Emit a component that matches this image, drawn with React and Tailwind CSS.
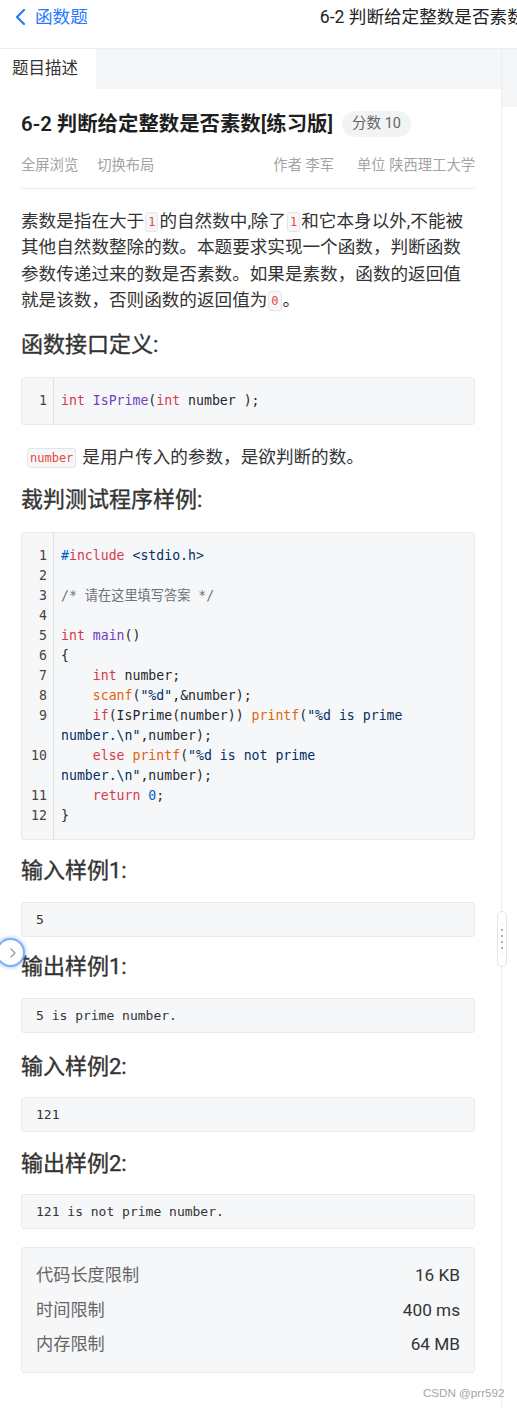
import React from 'react';

const C = {
  kw: '#d73a49',
  fn: '#6f42c1',
  str: '#032f62',
  tx: '#24292e',
  cm: '#6a737d',
  call: '#e36209',
  num: '#005cc5',
};

const sansFont = { fontFamily: 'Roboto, "Noto Sans CJK SC", sans-serif' };

const mainCode = [
  { n: '1', seg: [['#', C.num], ['include', C.kw], [' ', C.tx], ['<stdio.h>', C.str]] },
  { n: '2', seg: [] },
  { n: '3', seg: [['/* 请在这里填写答案 */', C.cm]] },
  { n: '4', seg: [] },
  { n: '5', seg: [['int', C.kw], [' ', C.tx], ['main', C.fn], ['()', C.tx]] },
  { n: '6', seg: [['{', C.tx]] },
  { n: '7', seg: [['    ', C.tx], ['int', C.kw], [' number;', C.tx]] },
  { n: '8', seg: [['    ', C.tx], ['scanf', C.call], ['(', C.tx], ['"%d"', C.str], [',&number);', C.tx]] },
  { n: '9', seg: [['    ', C.tx], ['if', C.kw], ['(IsPrime(number)) ', C.tx], ['printf', C.call], ['(', C.tx], ['"%d is prime', C.str]] },
  { n: '', seg: [['number.\\n"', C.str], [',number);', C.tx]] },
  { n: '10', seg: [['    ', C.tx], ['else', C.kw], [' ', C.tx], ['printf', C.call], ['(', C.tx], ['"%d is not prime', C.str]] },
  { n: '', seg: [['number.\\n"', C.str], [',number);', C.tx]] },
  { n: '11', seg: [['    ', C.tx], ['return', C.kw], [' ', C.tx], ['0', C.num], [';', C.tx]] },
  { n: '12', seg: [['}', C.tx]] },
];

const protoCode = [
  { n: '1', seg: [['int', C.kw], [' ', C.tx], ['IsPrime', C.fn], ['(', C.tx], ['int', C.kw], [' number );', C.tx]] },
];

const CodeBlock = ({ lines }) => (
  <div className="flex bg-[#f6f7f9] border border-[#e8eaed] rounded-[3px] font-['DejaVu_Sans_Mono','Noto_Sans_CJK_SC',monospace] text-[13.2px]">
    <div className="w-[32px] shrink-0 border-r border-[#dcdfe3] py-[13px] pr-[6px] text-right text-[#444]">
      {lines.map((l, i) => (
        <div key={i} className="h-[20px] leading-[20px]">{l.n}</div>
      ))}
    </div>
    <div className="flex-1 py-[13px] pl-[7px]">
      {lines.map((l, i) => (
        <div key={i} className="h-[20px] leading-[20px] whitespace-pre">
          {l.seg.map(([t, c], j) => (
            <span key={j} style={{ color: c }}>{t}</span>
          ))}
        </div>
      ))}
    </div>
  </div>
);

const InlineCode = ({ children, className = '' }) => (
  <code className={`inline-block align-[1px] h-[20px] leading-[18px] px-[2px] mx-[1px] bg-[#f6f7f9] border border-[#e5e6eb] rounded-[3px] text-[#e8473c] font-['DejaVu_Sans_Mono',monospace] text-[12px] ${className}`}>
    {children}
  </code>
);

const Heading = ({ children, className = '' }) => (
  <h3 className={`text-[22px] leading-[30px] font-normal text-[#333] [-webkit-text-stroke:0.35px_#333] ${className}`}>{children}</h3>
);

const SampleBox = ({ children, className = '' }) => (
  <div className={`bg-[#f6f7f9] border border-[#e8eaed] rounded-[3px] px-[14px] py-[6.5px] text-[13px] leading-[20px] text-[#333] whitespace-pre font-['DejaVu_Sans_Mono',monospace] ${className}`}>
    {children}
  </div>
);

export default function App() {
  return (
    <div className="relative w-[517px] h-[1408px] overflow-hidden bg-white text-[#333]" style={sansFont}>
      {/* Top bar */}
      <div className="flex h-[49px] border-b border-[#eceef1] overflow-hidden">
        <div className="flex items-start pt-[5px] pl-[14px] shrink-0 text-[#2878ff]">
          <svg width="12" height="24" viewBox="0 0 12 24">
            <path d="M10 5 L3 12 L10 19" fill="none" stroke="#2878ff" strokeWidth="2.2" strokeLinecap="round" strokeLinejoin="round" />
          </svg>
          <span className="ml-[9px] text-[17.6px] leading-[24px]">函数题</span>
        </div>
        <div className="ml-[232px] pt-[5px] shrink-0 whitespace-nowrap text-[17.6px] leading-[24px] text-[#222]">
          6-2 判断给定整数是否素数[练习版]
        </div>
      </div>

      <div className="flex">
        {/* Main column */}
        <div className="w-[501px] shrink-0">
          <div className="flex h-[40px] bg-[#f5f6f8]">
            <div className="w-[96px] bg-white pl-[12px] text-[16.5px] leading-[40px] text-[#333]">题目描述</div>
          </div>

          <div className="pl-[21px] pr-[26px]">
            <div className="flex items-center mt-[22px] h-[26px]">
              <h1 className="text-[20.4px] font-semibold text-[#1f1f1f] whitespace-nowrap">6-2 判断给定整数是否素数[练习版]</h1>
              <span className="ml-[9px] h-[26px] px-[10px] rounded-full bg-[#f2f3f5] text-[14.5px] leading-[26px] text-[#666]">分数 10</span>
            </div>

            <div className="flex items-center mt-[19px] h-[20px] text-[14.3px] text-[#a3a3a3] border-b border-[#ebebeb] pb-[12px] box-content">
              <span>全屏浏览</span>
              <span className="ml-[19px]">切换布局</span>
              <span className="ml-auto">作者 李军</span>
              <span className="ml-[23px]">单位 陕西理工大学</span>
            </div>

            <p className="mt-[19px] text-[17.6px] leading-[26.4px] text-[#333]">
              素数是指在大于<InlineCode>1</InlineCode>的自然数中,除了<InlineCode>1</InlineCode>和它本身以外,不能被其他自然数整除的数。本题要求实现一个函数，判断函数参数传递过来的数是否素数。如果是素数，函数的返回值就是该数，否则函数的返回值为<InlineCode>0</InlineCode>。
            </p>

            <Heading className="mt-[16px]">函数接口定义:</Heading>
            <div className="mt-[17px]">
              <CodeBlock lines={protoCode} />
            </div>

            <p className="mt-[19px] text-[17.6px] leading-[26.4px] text-[#333]">
              <InlineCode className="ml-[6px] mr-[6px]">number</InlineCode>是用户传入的参数，是欲判断的数。
            </p>

            <Heading className="mt-[15px]">裁判测试程序样例:</Heading>
            <div className="mt-[17px]">
              <CodeBlock lines={mainCode} />
            </div>

            <Heading className="mt-[16px]">输入样例1:</Heading>
            <SampleBox className="mt-[16px]">5</SampleBox>

            <Heading className="mt-[15px]">输出样例1:</Heading>
            <SampleBox className="mt-[16px]">5 is prime number.</SampleBox>

            <Heading className="mt-[19px]">输入样例2:</Heading>
            <SampleBox className="mt-[15px]">121</SampleBox>

            <Heading className="mt-[17px]">输出样例2:</Heading>
            <SampleBox className="mt-[15px]">121 is not prime number.</SampleBox>

            <div className="mt-[18px] bg-[#f6f7f9] border border-[#e8eaed] rounded-[3px] px-[14px] py-[10px] text-[17.2px]">
              {[
                ['代码长度限制', '16 KB'],
                ['时间限制', '400 ms'],
                ['内存限制', '64 MB'],
              ].map(([k, v]) => (
                <div key={k} className="flex justify-between h-[34.5px] leading-[34.5px]">
                  <span className="text-[#666]">{k}</span>
                  <span className="text-[#333]">{v}</span>
                </div>
              ))}
            </div>
          </div>
        </div>

        {/* Right side panel */}
        <div className="flex-1 border-l border-[#eceef1] h-[1359px]">
          <div className="h-[58px] bg-[#f5f6f8]" />
        </div>
      </div>

      {/* Drag handle */}
      <div className="absolute left-[497px] top-[911px] w-[10px] h-[56px] rounded-full bg-white border border-[#e3e5e8] flex flex-col items-center justify-center gap-[4px]">
        <span className="w-[1px] h-[1px] rounded-full bg-[#c8c8c8]" />
        <span className="w-[2px] h-[2px] rounded-full bg-[#999]" />
        <span className="w-[2px] h-[2px] rounded-full bg-[#999]" />
        <span className="w-[2px] h-[2px] rounded-full bg-[#999]" />
        <span className="w-[2px] h-[2px] rounded-full bg-[#999]" />
        <span className="w-[1px] h-[1px] rounded-full bg-[#c8c8c8]" />
      </div>

      {/* Floating expand button */}
      <div className="absolute left-[-4px] top-[938px] w-[29px] h-[29px] rounded-full bg-white border-2 border-[#7fb0f5] shadow-[0_0_4px_rgba(66,133,244,0.6)] flex items-center justify-center">
        <svg width="10" height="12" viewBox="0 0 10 12" className="ml-[5px]">
          <path d="M3 2 L7 6 L3 10" fill="none" stroke="#9a9a9a" strokeWidth="1.3" strokeLinecap="round" strokeLinejoin="round" />
        </svg>
      </div>

      {/* Watermark */}
      <div className="absolute left-[423px] top-[1385px] text-[11.6px] leading-[16px] text-[#a5a5a5] whitespace-nowrap" style={{ fontFamily: '"Liberation Sans", Arial, sans-serif' }}>
        CSDN @prr592
      </div>
    </div>
  );
}
